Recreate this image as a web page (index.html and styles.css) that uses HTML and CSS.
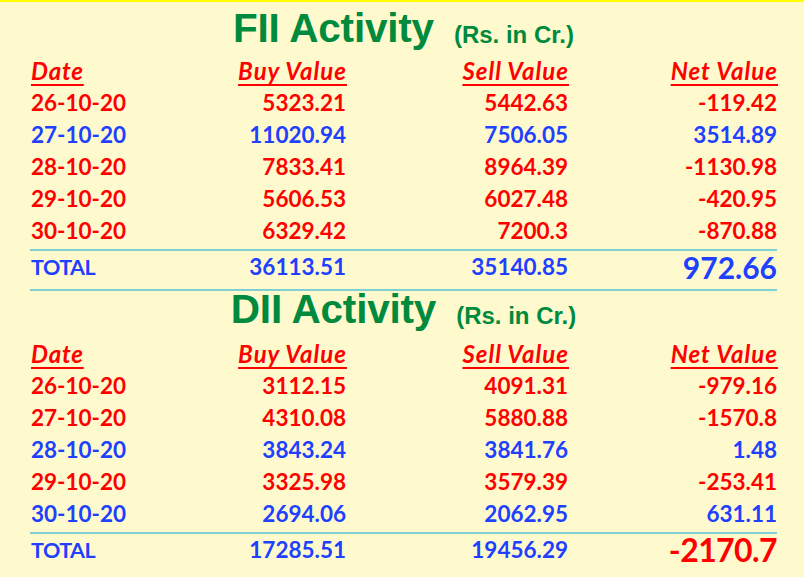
FILE: index.html
```html
<!DOCTYPE html>
<html>
<head>
<meta charset="utf-8">
<link rel="stylesheet" href="styles.css">
</head>
<body>
<div class="page">
  <section class="block first">
    <h1 class="title"><span class="big">FII Activity</span><span class="unit">(Rs. in Cr.)</span></h1>
    <div class="grid rows">
      <div class="hd l">Date</div><div class="hd">Buy Value</div><div class="hd">Sell Value</div><div class="hd">Net Value</div>
      <div class="red l">26-10-20</div><div class="red">5323.21</div><div class="red">5442.63</div><div class="red">-119.42</div>
      <div class="blue l">27-10-20</div><div class="blue">11020.94</div><div class="blue">7506.05</div><div class="blue">3514.89</div>
      <div class="red l">28-10-20</div><div class="red">7833.41</div><div class="red">8964.39</div><div class="red">-1130.98</div>
      <div class="red l">29-10-20</div><div class="red">5606.53</div><div class="red">6027.48</div><div class="red">-420.95</div>
      <div class="red l">30-10-20</div><div class="red">6329.42</div><div class="red">7200.3</div><div class="red">-870.88</div>
    </div>
    <div class="grid total">
      <div class="blue l tl">TOTAL</div><div class="blue">36113.51</div><div class="blue">35140.85</div><div class="blue net1">972.66</div>
    </div>
  </section>
  <section class="block second">
    <h1 class="title"><span class="big">DII Activity</span><span class="unit">(Rs. in Cr.)</span></h1>
    <div class="grid rows">
      <div class="hd l">Date</div><div class="hd">Buy Value</div><div class="hd">Sell Value</div><div class="hd">Net Value</div>
      <div class="red l">26-10-20</div><div class="red">3112.15</div><div class="red">4091.31</div><div class="red">-979.16</div>
      <div class="red l">27-10-20</div><div class="red">4310.08</div><div class="red">5880.88</div><div class="red">-1570.8</div>
      <div class="blue l">28-10-20</div><div class="blue">3843.24</div><div class="blue">3841.76</div><div class="blue">1.48</div>
      <div class="red l">29-10-20</div><div class="red">3325.98</div><div class="red">3579.39</div><div class="red">-253.41</div>
      <div class="blue l">30-10-20</div><div class="blue">2694.06</div><div class="blue">2062.95</div><div class="blue">631.11</div>
    </div>
    <div class="grid total nob">
      <div class="blue l tl">TOTAL</div><div class="blue">17285.51</div><div class="blue">19456.29</div><div class="red net2">-2170.7</div>
    </div>
  </section>
</div>
</body>
</html>
```

FILE: styles.css
```css
html, body {
  margin: 0;
  padding: 0;
  background: #fffacd;
}
.page {
  width: 804px;
  height: 577px;
  box-sizing: border-box;
  border-top: 2px solid #ffff00;
  background: #fffacd;
  padding: 0 27px 0 30px;
  overflow: hidden;
  font-family: Lato, "Open Sans", sans-serif;
  font-weight: 700;
}
.first {
  padding-top: 6px;
}
.second {
  margin-top: -2px;
}
.second .title {
  height: 50px;
}
.title {
  margin: 0;
  display: flex;
  align-items: baseline;
  justify-content: center;
  font-family: "Liberation Sans", Arial, sans-serif;
  font-weight: 700;
  color: #008a3e;
  height: 48px;
  line-height: 40px;
}
.big {
  font-size: 40.5px;
  letter-spacing: -0.2px;
}
.unit {
  font-size: 24px;
  margin-left: 20px;
  position: relative;
  top: 1px;
}
.grid {
  display: grid;
  grid-template-columns: 150px 166px 222px 209px;
  font-size: 22.5px;
  line-height: 32px;
  text-align: right;
}
.rows {
  grid-template-rows: 31px repeat(5, 32px);
  padding-bottom: 2px;
  border-bottom: 2px solid #7fd0d4;
}
.grid > div {
  white-space: nowrap;
}
.grid .l {
  text-align: left;
  padding-left: 1px;
}
.grid .hd {
  color: #ff0000;
  font-style: italic;
  font-size: 24px;
  line-height: 30px;
  letter-spacing: 1px;
  text-decoration: underline;
  text-decoration-thickness: 2px;
  text-underline-offset: 4px;
  margin-right: -1px;
}
.grid .hd.l {
  letter-spacing: 0.8px;
}
.red { color: #ff0000; }
.blue { color: #2040ff; }
.total {
  grid-template-rows: 32px;
  height: 38px;
  border-bottom: 2px solid #7fd0d4;
}
.total.nob {
  border-bottom: none;
}
.total > div {
  align-self: center;
}
.tl {
  font-size: 21.5px;
  letter-spacing: -0.5px;
}
.net1 {
  font-size: 30px;
}
.net2 {
  font-size: 32px;
  letter-spacing: -0.6px;
}
```
